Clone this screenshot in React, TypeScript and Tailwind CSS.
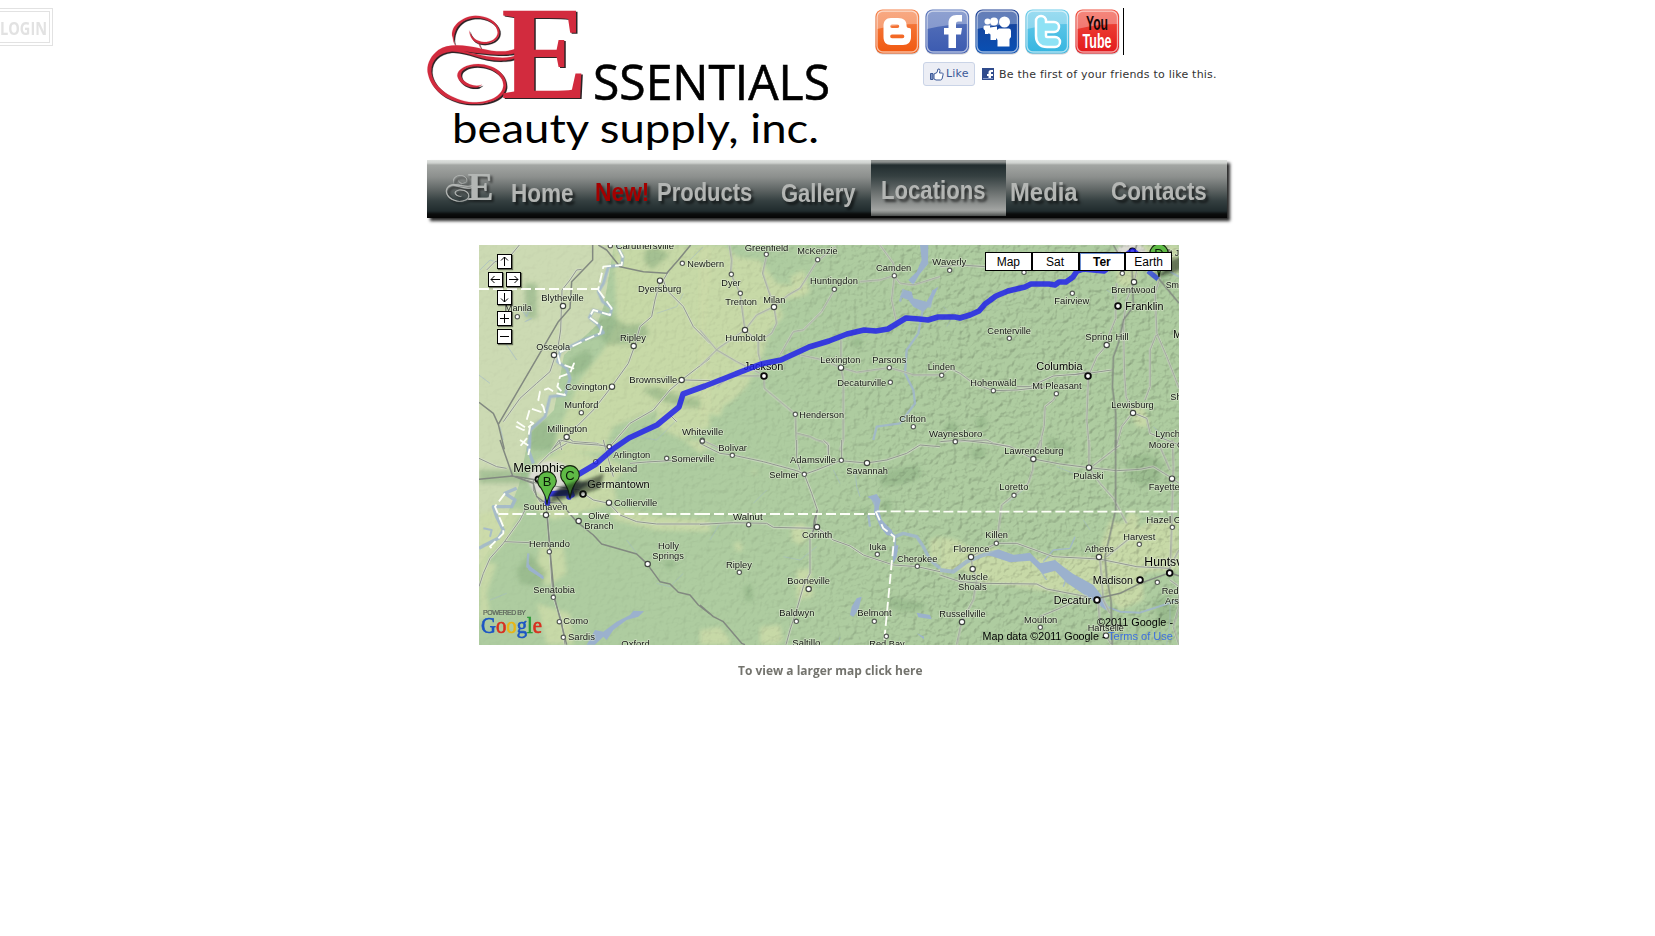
import type { ReactNode } from "react";

/* ---------- map data: every sheet is drawn at three units per pixel ---------- */

type Label = [text: string, x: number, y: number, width: number, size?: number];
type Dot = [x: number, y: number, kind?: "town" | "city" | "major"];

interface Sheet {
  ox: number;
  oy: number;
  light: string[];
  dark: string[];
  water: [d: string, width: number][];
  lakes: string[];
  roads: string[];
  highways: string[];
  borders: string[];
  dots: Dot[];
  labels: Label[];
}

const sheets: Sheet[] = [
  {
    ox: -9,
    oy: -5,
    light: [
      "M430 15H720V110L700 300L720 350L700 400L640 440L600 470L540 520L430 560L400 640H250L270 560L330 420L400 330L440 250Z",
      "M560 430L720 380V560L640 600L560 560Z",
    ],
    dark: [
      "M380 240L420 225L470 255L520 250L540 280L500 310L410 315L390 290Z",
      "M310 350L350 330L368 350L355 385L310 408L285 380Z",
      "M165 130H200V235H165Z",
      "M525 30L560 20L600 45L570 70L545 90L520 60Z",
      "M180 560L220 540L260 580L250 630H180Z",
      "M515 450L560 440L640 470L700 480L720 505L640 500L560 480Z",
    ],
    water: [
      ["M440 15L458 50L455 75L415 80L400 130L385 155L398 185L425 205L420 225L370 210L358 232L385 255L400 278L340 300L270 335L262 365L290 385L300 415L285 465L240 470L225 530L180 570L178 630", 9],
      ["M150 200L170 230L180 200M165 245L185 235", 3],
      ["M30 90L60 60L90 70M100 300L140 360M20 400L60 430M90 560L100 600", 2],
      ["M640 160L620 200L560 220M620 540L560 600L500 590M660 60L700 20", 1.5],
    ],
    lakes: [],
    roads: [
      "M148 15L115 55L75 65L50 90",
      "M275 630L268 600L248 628",
      "M335 88L320 90L300 120L276 150L272 270L265 315L255 350L240 395L200 430L150 475L100 545",
      "M570 125L555 180L545 230L510 260L495 315L475 370L425 440L370 510L290 590L245 630",
      "M595 95L580 120L590 150L640 200L670 260L700 290L720 310",
      "M720 355L680 385L635 420L600 450L550 510L480 550L420 620",
      "M290 590L310 605L380 610L415 622",
      "M640 420L720 422",
      "M600 525L620 545",
    ],
    highways: [
      "M368 15V60L305 125L300 205L265 245L85 553L103 628M85 553L70 520L27 487",
      "M385 15L410 30L450 80L520 95L590 100L625 60L662 15",
    ],
    borders: ["M27 147H385L400 80L455 75L458 50L440 15M385 150L425 205L420 225L370 210L358 232L395 260L390 280L262 340L270 370L310 385L312 370L300 400L270 410L262 440L285 465L260 460L235 445L210 455L205 480L220 500L225 520L180 505L170 540L190 550L170 565L140 545V560L160 570L180 560L175 590L145 625"],
    dots: [[421, 17], [637, 70], [570, 122, "city"], [279, 198, "city"], [142, 230], [252, 345, "city"], [491, 318, "city"], [426, 440, "city"], [334, 518], [635, 420, "city"], [290, 591, "city"], [418, 620], [697, 601]],
    labels: [
      ["Caruthersville", 437, 27, 175],
      ["Newbern", 652, 79, 110],
      ["Dyersburg", 504, 156, 130],
      ["Blytheville", 214, 183, 127],
      ["Manila", 104, 213, 82],
      ["Ripley", 450, 303, 78],
      ["Osceola", 199, 330, 101],
      ["Brownsville", 478, 429, 144],
      ["Covington", 286, 450, 127],
      ["Munford", 283, 503, 102],
      ["Millington", 232, 576, 120],
      ["Whiteville", 636, 585, 124],
    ],
  },
  {
    ox: 221,
    oy: -5,
    light: [
      "M0 15H75L110 50L180 60L230 130L300 140L330 160L280 175L230 180L250 230L210 270L190 340L140 440L100 480L70 500L60 530L20 520L0 540Z",
      "M270 110L310 90L330 150L290 175Z",
    ],
    dark: ["M455 300L480 290L490 310L470 325L450 315Z"],
    water: [
      ["M668 15L682 70L640 120M645 190L610 150L600 185M640 190L690 200L700 150M670 200L655 280L620 330L615 400L640 450L645 490L600 550L530 560L520 600", 7],
    ],
    lakes: [
      "M660 15H685L684 70L660 100L640 135L625 120L650 95L665 60Z",
      "M600 170L615 150L635 155L640 175L680 185L700 150L715 140L690 195L670 215L640 200L625 180Z",
    ],
    roads: [
      "M88 15L95 60L92 100L120 160L135 270L175 305V340L183 370",
      "M200 45L188 100L205 150L222 200L230 250L215 280L175 305",
      "M407 20L350 65L300 145L265 165L222 200L170 225L135 270L55 325L0 378",
      "M403 150L365 215L310 270L280 275L240 345",
      "M0 270L50 330L110 365L180 400",
      "M480 125L540 120L583 107L600 130L640 135L720 110",
      "M540 15L580 70L583 107L575 180L590 250",
      "M300 345L370 360L423 383L470 397L568 383L610 395L640 405H720",
      "M423 300V383L430 420V600L420 630",
      "M100 408H180M50 440L100 405",
      "M192 408L193 445L286 523L290 630M290 580L330 590L350 600L385 610V630",
      "M7 601L0 600M7 601L70 630",
    ],
    highways: [],
    borders: [],
    dots: [[199, 43], [353, 59], [94, 103], [121, 160], [222, 201, "city"], [403, 148], [583, 107], [135, 270, "city"], [423, 383, "city"], [568, 383], [571, 427], [192, 408, "major"], [286, 523], [640, 560]],
    labels: [
      ["Greenfield", 134, 31, 131],
      ["McKenzie", 292, 42, 121],
      ["Dyer", 64, 136, 58],
      ["Trenton", 76, 195, 95],
      ["Milan", 190, 187, 66],
      ["Huntingdon", 330, 132, 144],
      ["Camden", 528, 93, 106],
      ["Humboldt", 76, 303, 121],
      ["Lexington", 361, 369, 120],
      ["Parsons", 517, 369, 102],
      ["Decaturville", 412, 436, 147],
      ["Jackson", 131, 388, 119, 31],
      ["Henderson", 298, 534, 134],
      ["Clifton", 598, 546, 80],
      ["Bolivar", 55, 632, 86],
    ],
  },
  {
    ox: 461,
    oy: -5,
    light: ["M530 80L570 75L600 110L560 145L530 130Z", "M560 15H717V110L690 95L640 110L600 70L560 45Z", "M565 500L610 500L630 560L590 560Z"],
    dark: ["M105 540L130 525L145 555L115 570Z", "M10 560L40 540L60 570L30 585Z", "M320 590L350 600L400 630H330Z", "M640 80L690 60L700 100L650 130Z"],
    water: [["M690 95L717 110", 6], ["M10 200L40 230L20 260M500 150L530 170", 1.5], ["M640 560L680 600", 2]],
    lakes: [],
    roads: [
      "M0 80L60 75L136 80M252 97L260 90",
      "M581 30L590 90L582 126L560 180L550 250L553 400L558 470L578 518L545 560L525 630",
      "M530 130L527 170V235L505 290L500 315L470 350L445 408L440 540L448 630",
      "M515 390L445 400L340 408L270 440L230 440",
      "M0 405L30 385L60 400L100 430L160 452L230 450L320 440",
      "M349 460L340 480L315 500L312 560L305 590L302 630",
      "M660 110L645 160L650 280L680 350L717 445M648 285L630 330V440L615 480",
      "M578 518L620 535L630 580L717 615",
      "M45 604L140 600L160 610L210 620",
      "M445 395L400 405",
    ],
    highways: ["M590 15L575 60L580 200L550 240L535 310L520 350L517 440L527 520V630", "M655 115L717 190M520 15L545 60L580 70"],
    borders: [],
    dots: [[29, 91], [252, 97], [397, 160], [547, 100], [582, 126, "city"], [534, 198, "major"], [208, 295], [500, 315, "city"], [444, 408, "major"], [5, 406], [160, 452], [349, 461], [579, 519, "city"], [46, 604], [577, 34, "major"]],
    labels: [
      ["Waverly", -23, 75, 102],
      ["Brentwood", 514, 159, 133],
      ["Sm", 677, 144, 40],
      ["lt J", 684, 46, 33],
      ["Fairview", 343, 192, 105],
      ["Franklin", 556, 208, 114, 31],
      ["Centerville", 142, 282, 131],
      ["Spring Hill", 436, 300, 130],
      ["Mu", 700, 293, 42, 31],
      ["Columbia", 289, 388, 139, 31],
      ["Linden", -37, 390, 82],
      ["Hohenwald", 91, 438, 138],
      ["Mt Pleasant", 277, 446, 148],
      ["Shel", 691, 480, 55],
      ["Lewisburg", 514, 504, 127],
      ["Waynesboro", -33, 591, 160],
      ["Lynchb", 646, 591, 90],
    ],
  },
  {
    ox: -9,
    oy: 195,
    light: [
      "M27 220L100 210L160 205L110 300L60 350L27 430Z",
      "M200 60L300 30L420 60L470 80L430 130L440 180L400 200L250 240L200 210Z",
      "M210 320L280 320L290 400L230 440L200 380Z",
      "M430 200L560 230L720 240V275L560 270L430 240Z",
      "M27 370H80L50 460L60 520L27 540Z",
      "M200 490L300 520L310 614H230Z",
      "M640 0H720V20L690 40Z",
    ],
    dark: ["M27 90H180L170 130H27Z", "M140 390L180 340L230 400L210 440L150 430Z", "M580 365L610 358L618 378L590 388Z"],
    water: [
      ["M178 0L175 30L190 70M140 145L105 160L135 180L125 200L70 200L80 230L100 270L85 295L45 315L27 325", 10],
      ["M40 265L65 270L60 290", 6],
      ["M175 340L172 380L220 415", 7],
      ["M60 480L110 460M640 400L600 440L560 430M470 300L500 340", 1.5],
    ],
    lakes: [
      "M350 614L375 570L400 575L440 545L480 525L490 512L522 514L505 530L470 540L430 570L410 600L400 590L375 614Z",
      "M172 365L182 380L220 408V418L175 390Z",
    ],
    roads: [
      "M27 55L80 80L110 85M290 10L240 40L190 90M270 0L310 10L385 15L418 20",
      "M480 70L530 66L720 55",
      "M270 190L210 185L190 150V120",
      "M165 210L150 240L100 310L60 355L40 400L27 440",
      "M105 305L180 308",
      "M232 225L240 335L245 420L250 470L275 545L285 614",
      "M340 160L370 180L417 190L450 225L500 245L560 252H720",
      "M400 0L410 40L430 110",
      "M120 105L200 130L330 150",
    ],
    highways: [
      "M90 0L128 108L190 130L200 170L228 190L240 330L253 470L290 614M27 118L128 108L200 120",
      "M260 170L290 210L320 245L370 285L395 312L500 342L530 370L570 425L600 432L625 457L660 465L685 495L720 522",
    ],
    borders: ["M85 222H720", "M150 0L180 20L175 45M105 160L75 200L100 260V280L60 320L70 330"],
    dots: [[418, 20], [590, 55], [697, 4], [205, 118, "major"], [339, 162, "major"], [417, 188, "city"], [228, 225, "city"], [326, 243, "city"], [238, 335], [533, 372, "city"], [250, 472], [268, 545], [280, 592], [377, 65]],
    labels: [
      ["Arlington", 430, 54, 111],
      ["Lakeland", 388, 96, 114],
      ["Somerville", 604, 65, 130],
      ["Memphis", 130, 95, 156, 36],
      ["Germantown", 352, 142, 187, 31],
      ["Collierville", 432, 197, 130],
      ["Southaven", 160, 210, 132],
      ["Olive", 355, 237, 63],
      ["Branch", 343, 267, 88],
      ["Hernando", 177, 321, 123],
      ["Holly", 564, 327, 63],
      ["Springs", 547, 357, 95],
      ["Senatobia", 190, 459, 125],
      ["Como", 280, 552, 75],
      ["Sardis", 294, 600, 81],
      ["Oxford", 454, 620, 85],
    ],
  },
  {
    ox: 221,
    oy: 195,
    light: [
      "M275 260L310 250L330 290L300 315L275 300Z",
      "M100 310L120 305L130 330L110 335Z",
      "M180 560L240 555L250 600L230 614H180Z",
      "M0 570L60 560L90 600V614H0Z",
      "M690 300L720 290V370L690 360Z",
      "M290 390L330 385L340 470L290 480Z",
      "M155 90L168 90L165 110Z",
      "M495 60L515 60L510 85Z",
    ],
    dark: [
      "M535 100L600 85L655 75L665 110L600 135L545 140Z",
      "M540 190L570 175L575 210L550 220Z",
      "M130 440L155 435L160 480L138 485Z",
      "M570 470L640 485L672 490V510L600 515L565 500Z",
      "M475 210L500 205L505 225L480 225Z",
    ],
    water: [
      ["M515 170L530 200L540 240L565 275L585 290L610 280L650 290L670 320L690 360L720 385", 10],
      ["M505 225L510 260M585 290V350L590 330", 7],
      ["M465 90L470 140L480 170", 2],
      ["M350 320L300 360L250 350M200 150L160 190M400 90L420 130M60 250L30 300M420 590L415 614", 1.5],
    ],
    lakes: [
      "M502 170L530 162L542 180L535 210L545 240L575 270L583 290L560 285L540 260L522 215L525 185Z",
      "M455 500L470 475L485 470L475 510L460 530L450 525Z",
      "M650 518L690 525L695 538L655 532Z",
      "M650 580L672 590V598Z",
      "M575 320L595 315L590 350L580 370Z",
    ],
    roads: [
      "M0 10L60 40L97 45L190 65L290 92L313 103L350 90L420 62L500 69L560 60L620 40L660 15L720 20",
      "M290 0V60L300 90M370 0L385 15V45M425 0V55",
      "M313 103L335 160L352 210L345 260L330 290V400L310 440L290 510L270 570L258 614",
      "M0 253L100 248L200 250L220 262L340 265",
      "M350 262L400 300L450 318L490 345L580 375L652 380L720 395",
    ],
    highways: ["M0 495L40 530L70 545L125 610L135 614", "M352 210L343 240L340 275"],
    borders: ["M0 222H525M530 214H720", "M527 214L550 265L583 290L575 370L553 600"],
    dots: [[97, 46], [424, 61], [501, 69, "city"], [313, 103], [146, 254], [351, 261, "city"], [118, 397], [532, 343], [652, 379], [326, 447, "city"], [289, 544], [523, 544], [559, 589], [7, 3]],
    labels: [
      ["Adamsville", 270, 69, 138],
      ["Savannah", 439, 102, 125],
      ["Selmer", 208, 113, 88],
      ["Walnut", 99, 240, 89],
      ["Corinth", 306, 294, 91],
      ["Iuka", 508, 330, 51],
      ["Cherokee", 591, 366, 121],
      ["Ripley", 78, 384, 78],
      ["Booneville", 262, 432, 128],
      ["Baldwyn", 238, 528, 105],
      ["Belmont", 472, 528, 103],
      ["Saltillo", 277, 616, 84],
      ["Red Bay", 508, 620, 106],
    ],
  },
  {
    ox: 461,
    oy: 195,
    light: [
      "M0 290L50 300L100 330L170 325L240 355L330 350L470 350L510 240L600 260L630 240L717 240V390L610 400V480L540 510L480 450L470 470L300 450L200 435L130 430L70 390L0 400Z",
      "M570 210L600 230L590 260L550 250Z",
    ],
    dark: ["M560 60L620 40L670 70L660 120L610 140L560 110Z", "M90 30L130 20L140 50L100 60Z", "M640 480L690 470L717 520L660 560Z"],
    water: [
      ["M0 390L40 395L80 365L130 345L170 335L220 350L270 350L310 385L350 375L380 410L420 440L470 470L500 500", 12],
      ["M500 500L540 515L600 518L717 480", 6],
      ["M310 365L340 330L390 325L405 290M300 390L320 420M380 410L370 440", 4],
      ["M690 480V550L680 614M250 150L200 190M350 80L400 100M430 240L450 270", 1.5],
    ],
    lakes: [
      "M140 345L175 328L220 345L270 338L300 370L345 360L370 380L400 402L460 435L495 480L500 512L470 490L420 455L380 428L345 392L310 402L270 362L210 367L160 350Z",
    ],
    roads: [
      "M0 5L60 0L150 10L210 20L280 57L360 72L447 83L530 92L600 88L640 80L697 115L717 130",
      "M302 0L280 57L278 90L265 130L222 165L185 195L170 310",
      "M447 0V83L480 130L520 175L560 250",
      "M170 310H230L340 350L477 357L590 380L690 385",
      "M93 350L130 330L170 310M93 350L98 387L110 420L100 480L65 545L50 614",
      "M0 405L60 425L130 430L290 432L320 447L440 470L300 530",
      "M697 0L700 80L695 262L690 400M660 20L690 90M680 400L717 330",
      "M480 357L490 480L510 520M575 290L500 350M540 15L520 30L450 85",
      "M475 485L480 560L500 590L515 614M690 420L717 440V500L700 560L717 614",
    ],
    highways: ["M527 0V210L495 350L500 410L513 480L517 614", "M475 475L540 460L600 430L690 398L717 408"],
    borders: ["M10 215H717"],
    dots: [[280, 57, "city"], [447, 83, "city"], [222, 166], [696, 116, "city"], [169, 310], [93, 351, "city"], [98, 387, "city"], [477, 351, "city"], [598, 313], [697, 262], [689, 399, "major"], [600, 420, "major"], [471, 480, "major"], [652, 427], [66, 546, "city"], [301, 562], [498, 587, "city"], [46, 5]],
    labels: [
      ["Lawrenceburg", 193, 42, 177],
      ["Moore Co", 626, 23, 120],
      ["Loretto", 178, 150, 87],
      ["Pulaski", 400, 116, 91],
      ["Fayette", 626, 150, 93],
      ["Hazel Gr", 619, 248, 115],
      ["Killen", 136, 294, 68],
      ["Harvest", 550, 299, 96],
      ["Florence", 40, 336, 108],
      ["Athens", 435, 336, 87],
      ["Huntsvi", 613, 378, 122, 36],
      ["Madison", 458, 430, 121, 31],
      ["Muscle", 54, 420, 90],
      ["Shoals", 54, 450, 86],
      ["Redst", 665, 461, 72],
      ["Ars", 675, 490, 42],
      ["Decatur", 341, 490, 113, 31],
      ["Russellville", -2, 531, 139],
      ["Moulton", 252, 549, 100],
      ["Hartselle", 443, 573, 109],
    ],
  },
];

const dotStyles = {
  town: { r: 6.5, w: 3.5, stroke: "#565b55" },
  city: { r: 8, w: 3.5, stroke: "#3f443f" },
  major: { r: 8.5, w: 5.5, stroke: "#0a0a0a" },
};

function Layer({ children }: { children: (s: Sheet) => ReactNode }) {
  return (
    <>
      {sheets.map((s, i) => (
        <g key={i} transform={`translate(${s.ox} ${s.oy}) scale(0.33333)`}>
          {children(s)}
        </g>
      ))}
    </>
  );
}

function Pin({ x, y, letter }: { x: number; y: number; letter: string }) {
  return (
    <g transform={`translate(${x} ${y})`}>
      <path d="M0 0L12 -17L34 -25L30 -10Z" fill="#101810" opacity="0.5" filter="url(#soft)" />
      <path d="M0 0C-0.8 -9 -3.5 -12 -6 -16.500A9.3 9.3 0 1 1 6 -16.500C3.5 -12 0.8 -9 0 0Z" fill="#5fba46" stroke="#16260f" strokeWidth="1.1" />
      <text y="-19" textAnchor="middle" fontSize="13" fill="#0b1a08" fontFamily="Liberation Sans, sans-serif">
        {letter}
      </text>
    </g>
  );
}

function RouteMap() {
  const route =
    "M68.500 258V249L92 247.500L93 250M90 252L95 232L117 219L134 204L150 193L178 180L200 162L204 149L226 141L254 130L282 119L302 115L330 102L350 96L368 89L385 85L397 86L409 84L427 73L440 74L449 75L459 72L476 72L481 73L491 70L500 66L506 59L517 51L529 46L546 42L552 39L570 39L576 40L580 37L587 37L594 32L598 26L604 24L625 26L640 15L650 8L654 6L657 8";
  return (
    <svg width="700" height="400" viewBox="0 0 700 400" className="block overflow-hidden">
      <defs>
        <filter id="relief" x="0" y="0" width="100%" height="100%" colorInterpolationFilters="sRGB">
          <feTurbulence type="fractalNoise" baseFrequency="0.17" numOctaves="3" seed="11" />
          <feColorMatrix values="0 0 0 0 0  0 0 0 0 0  0 0 0 0 0  1 0 0 0 0" />
          <feDiffuseLighting surfaceScale="2.2" diffuseConstant="1.18" lightingColor="#ffffff">
            <feDistantLight azimuth="225" elevation="58" />
          </feDiffuseLighting>
        </filter>
        <filter id="soft" x="-20%" y="-20%" width="140%" height="140%">
          <feGaussianBlur stdDeviation="1.6" />
        </filter>
        <filter id="softer" x="-20%" y="-20%" width="140%" height="140%">
          <feGaussianBlur stdDeviation="7" />
        </filter>
        <linearGradient id="hills">
          <stop offset="0.08" stopColor="#fff" stopOpacity="0.04" />
          <stop offset="0.4" stopColor="#fff" stopOpacity="0.13" />
          <stop offset="0.65" stopColor="#fff" stopOpacity="0.3" />
        </linearGradient>
        <mask id="hillmask">
          <rect width="700" height="400" fill="url(#hills)" />
        </mask>
      </defs>
      <rect width="700" height="400" fill="#aecca0" />
      <path d="M0 0H135L125 60L118 80L85 110L75 165L50 190L40 240L20 290L0 320Z" fill="#ccdab3" />
      <Layer>
        {(s) => (
          <g filter="url(#softer)">
            {s.light.map((d) => <path key={d} d={d} fill="#cbdba8" opacity="0.85" />)}
            {s.dark.map((d) => <path key={d} d={d} fill="#8db083" opacity="0.6" />)}
          </g>
        )}
      </Layer>
      <ellipse cx="72" cy="234" rx="22" ry="18" fill="#dcdcd4" filter="url(#soft)" />
      <ellipse cx="652" cy="10" rx="16" ry="12" fill="#dcdcd4" filter="url(#soft)" />
      <g mask="url(#hillmask)" className="mix-blend-multiply">
        <rect width="700" height="400" filter="url(#relief)" />
      </g>
      <Layer>
        {(s) => (
          <g>
            {s.water.map(([d, w]) => <path key={d} d={d} fill="none" stroke="#a0b6cc" strokeWidth={w} strokeLinejoin="round" opacity="0.85" />)}
            {s.lakes.map((d) => <path key={d} d={d} fill="#9bb1cd" />)}
          </g>
        )}
      </Layer>
      <Layer>
        {(s) => (
          <g fill="none" strokeLinejoin="round">
            {s.roads.map((d) => <path key={d} d={d} stroke="#d9e0d0" strokeWidth="7" opacity="0.75" />)}
            {s.roads.map((d) => <path key={d + "r"} d={d} stroke="#90978e" strokeWidth="3" />)}
            {s.highways.map((d) => <path key={d} d={d} stroke="#828980" strokeWidth="4.5" />)}
            {s.borders.map((d) => <path key={d} d={d} stroke="#fdfff8" strokeWidth="5.5" strokeDasharray="30 12" />)}
          </g>
        )}
      </Layer>
      <Layer>
        {(s) => (
          <g>
            {s.dots.map(([x, y, kind = "town"]) => (
              <circle key={`${x}-${y}`} cx={x} cy={y} r={dotStyles[kind].r} fill="#fff" stroke={dotStyles[kind].stroke} strokeWidth={dotStyles[kind].w} />
            ))}
            {s.labels.map(([text, x, y, width, size = 28]) => (
              <text
                key={text}
                x={x}
                y={y + 1}
                textLength={width}
                lengthAdjust="spacingAndGlyphs"
                fontSize={size}
                fontFamily="Liberation Sans, sans-serif"
                fill={size > 28 ? "#000" : "#161916"}
                stroke="#e3ecd6"
                strokeOpacity="0.6"
                strokeWidth="5"
                strokeLinejoin="round"
                paintOrder="stroke"
              >
                {text}
              </text>
            ))}
          </g>
        )}
      </Layer>
      <path d={route} fill="none" stroke="#1c1cec" strokeOpacity="0.82" strokeWidth="5.6" strokeLinejoin="round" strokeLinecap="round" />
      <path d="M669 26L679 34" stroke="#2f45e0" strokeOpacity="0.8" strokeWidth="5" />
      <path d="M70 253L94 249L112 238L96 236L78 246Z" fill="#0c1430" opacity="0.6" filter="url(#soft)" />
      <Pin x={91} y={253.5} letter="C" />
      <Pin x={68} y={259.5} letter="B" />
      <Pin x={680} y={32} letter="D" />
      <text x="4" y="370" fontSize="7" textLength="43" fill="#5b625a" stroke="#5b625a" strokeWidth="0.2" fontFamily="Liberation Sans, sans-serif">
        POWERED BY
      </text>
      <text x="2" y="388" fontSize="23" textLength="61" lengthAdjust="spacingAndGlyphs" fontFamily="Liberation Serif, serif" strokeWidth="0.7">
        <tspan fill="#1c56c4" stroke="#1c56c4">G</tspan>
        <tspan fill="#d8301f" stroke="#d8301f">o</tspan>
        <tspan fill="#e9b515" stroke="#e9b515">o</tspan>
        <tspan fill="#1c56c4" stroke="#1c56c4">g</tspan>
        <tspan fill="#2b9a36" stroke="#2b9a36">l</tspan>
        <tspan fill="#d8301f" stroke="#d8301f">e</tspan>
      </text>
      <g fontSize="11.500" fontFamily="Liberation Sans, sans-serif" fill="#000">
        <text x="618" y="381" textLength="76" lengthAdjust="spacingAndGlyphs">©2011 Google -</text>
        <text x="503.500" y="395" textLength="123" lengthAdjust="spacingAndGlyphs">Map data ©2011 Google -</text>
        <text x="629" y="395" textLength="65" lengthAdjust="spacingAndGlyphs" fill="#3c6fe0">Terms of Use</text>
      </g>
    </svg>
  );
}

function PanButton({ d, className }: { d: string; className: string }) {
  return (
    <button className={`absolute flex size-[15px] items-center justify-center border border-black bg-white shadow-[1px_1px_1px_rgba(0,0,0,0.5)] ${className}`}>
      <svg width="13" height="13" viewBox="0 0 13 13" className="shrink-0" fill="none" stroke="#000" strokeWidth="1">
        <path d={d} />
      </svg>
    </button>
  );
}

/* ---------- header ---------- */

function Ampersand({ color }: { color: string }) {
  return (
    <g fill={color} stroke={color} strokeLinecap="round" strokeLinejoin="round">
      <path
        d="M148 93C150 120 168 132 192 132C225 130 242 112 238 90C230 60 195 46 165 47C120 50 88 85 98 112C100 124 101 130 106 136C98 122 102 98 112 82C128 58 155 52 178 54C208 58 232 75 233 98C232 116 212 126 192 126C172 124 156 116 148 93Z"
        strokeWidth="0.5"
      />
      <path
        d="M290 144C265 158 225 156 185 146C130 134 85 130 55 150C28 170 18 200 24 222C34 272 85 308 150 312C205 314 250 300 258 262C262 222 225 194 175 192C135 192 106 212 113 232C122 256 150 266 174 262L186 254C170 261 146 256 130 241C112 220 130 200 170 199C215 200 250 226 250 256C248 290 205 308 158 307C96 301 38 262 34 215C33 180 56 160 92 155C135 152 180 182 240 182C265 182 280 178 290 172L288 166C265 176 225 178 130 153C225 168 270 166 290 158Z"
        strokeWidth="0.5"
      />
      <path d="M176 130L181 142" fill="none" strokeWidth="2" />
    </g>
  );
}

function LogoMark({ color, shade }: { color: string; shade: string }) {
  return (
    <>
      <g transform="translate(1.200 1.300) scale(0.33333)">
        <Ampersand color={shade} />
      </g>
      <text x="82.600" y="99.300" fontSize="134" fontWeight="bold" fontFamily="Liberation Serif, serif" textLength="87" lengthAdjust="spacingAndGlyphs" fill={shade}>
        E
      </text>
      <g transform="scale(0.33333)">
        <Ampersand color={color} />
      </g>
      <text x="81" y="98" fontSize="134" fontWeight="bold" fontFamily="Liberation Serif, serif" textLength="87" lengthAdjust="spacingAndGlyphs" fill={color}>
        E
      </text>
    </>
  );
}

function Logo() {
  return (
    <svg width="420" height="155" viewBox="0 0 420 155" className="-ml-[7px] block shrink-0">
      <LogoMark color="#d22b3e" shade="#2b2326" />
      <text x="173" y="99.500" fontSize="50" textLength="237" lengthAdjust="spacingAndGlyphs" fontFamily="Open Sans, Noto Sans, sans-serif" fill="#000" stroke="#000" strokeWidth="0.6">
        SSENTIALS
      </text>
      <text x="32" y="142.500" fontSize="40" textLength="367" lengthAdjust="spacingAndGlyphs" fontFamily="Lato, sans-serif" fill="#000">
        beauty supply, inc.
      </text>
    </svg>
  );
}

function Badge({ id, top, bottom, children }: { id: string; top: string; bottom: string; children: ReactNode }) {
  return (
    <svg width="45" height="46" viewBox="0 0 45 46" className="block shrink-0">
      <defs>
        <linearGradient id={id} x1="0" y1="0" x2="0" y2="1">
          <stop offset="0" stopColor={top} />
          <stop offset="1" stopColor={bottom} />
        </linearGradient>
      </defs>
      <rect x="0.500" y="1.500" width="44" height="44" rx="7" fill="#8a8a90" opacity="0.4" />
      <rect x="0.500" y="0.500" width="43.500" height="44" rx="7" fill={`url(#${id})`} />
      <path d="M2 20V8Q2 2 8 2H37Q42.500 2 42.500 8V15Q24 15 2 20Z" fill="#fff" opacity="0.32" />
      <rect x="2" y="2" width="40.500" height="41" rx="6" fill="none" stroke="#fff" strokeOpacity="0.6" strokeWidth="1.300" />
      {children}
    </svg>
  );
}

function SocialRow() {
  return (
    <div className="-ml-[0.5px] flex h-[47px] items-start gap-[5px]">
      <Badge id="blogger" top="#f5824a" bottom="#f1580f">
        <path fillRule="evenodd" fill="#fff" d="M16 9H23C29 9 31.500 12 31.500 16C31.500 18 32 19 34 19C36 19 36 20 36 22V28C36 33 33 36 28 36H16C11 36 8.500 33 8.500 28V17C8.500 12 11 9 16 9ZM17 15.500A1.700 1.700 0 0 0 17 19H22.500A1.700 1.700 0 0 0 22.500 15.500ZM17 25.500A1.800 1.800 0 0 0 17 29.200H27.500A1.800 1.800 0 0 0 27.500 25.500Z" />
      </Badge>
      <Badge id="fb" top="#5a75bb" bottom="#3b5ab0">
        <path fill="#fff" d="M37 6V12.500H33.500C31.500 12.500 31 13.500 31 15V19H37L36 25.500H31V39H23.500V25.500H19V19H23.500V14C23.500 9 26.500 6 31.500 6Z" />
      </Badge>
      <Badge id="myspace" top="#1c3f94" bottom="#0850b4">
        <g fill="#fff">
          <circle cx="12.500" cy="12.500" r="3" />
          <circle cx="19" cy="12.500" r="4" />
          <circle cx="29.500" cy="13" r="5.500" />
          <path d="M8.500 18Q8.500 16.500 10 16.500H15V18.500L22 17.500V21L24 19.500H34Q36 19.500 36 22V28L34.500 30V37.500H22.500V31L21 29V31H15.500V25.500L13.500 24V25H10V21.500L8.500 20Z" />
        </g>
      </Badge>
      <Badge id="twitter" top="#6cccea" bottom="#35b5e0">
        <path d="M16 12V27Q16 33 22 33H30M16 18H29" fill="none" stroke="#fff" strokeWidth="12.500" strokeLinecap="round" />
        <path d="M16 12V27Q16 33 22 33H30M16 18H29" fill="none" stroke="#8ee2f5" strokeWidth="7.500" strokeLinecap="round" />
      </Badge>
      <Badge id="youtube" top="#f0503e" bottom="#e3181c">
        <text x="11" y="21" fontSize="20" fontWeight="bold" textLength="22" lengthAdjust="spacingAndGlyphs" fontFamily="Liberation Sans, sans-serif" fill="#180808">
          You
        </text>
        <text x="7.500" y="39" fontSize="20" fontWeight="bold" textLength="29" lengthAdjust="spacingAndGlyphs" fontFamily="Liberation Sans, sans-serif" fill="#fff">
          Tube
        </text>
      </Badge>
      <div className="-mt-px -ml-[1.5px] h-[47px] w-px bg-black" />
    </div>
  );
}

function LikeRow() {
  return (
    <div className="mt-[6px] ml-[48px] flex h-6 items-center font-['DejaVu_Sans',sans-serif] text-[11px]">
      <button className="flex h-6 w-[52px] items-center rounded-[3px] border border-[#cad4e7] bg-[#eceef5] pl-[6px] text-[#3b5998]">
        <svg width="14" height="13" viewBox="0 0 14 13" className="mr-[2px] shrink-0">
          <path d="M0.500 5.500H3V11.500H0.500Z" fill="#7f93c2" stroke="#3b5998" />
          <path d="M4 6L7 4.500L8 1Q10 0.500 10 2.500L9.500 5H12.500Q13.500 5.500 13 7L12 11Q11.500 12 10.500 12H6L4 11Z" fill="#fff" stroke="#3b5998" />
        </svg>
        <span className="pt-px tracking-[0.2px]">Like</span>
      </button>
      <svg width="12" height="12" viewBox="0 0 12 12" className="ml-[7px] shrink-0">
        <path d="M0 0H12V12H0Z" fill="#2f4b8c" />
        <path d="M11 2V4H9.500Q9 4 9 5V6H11V8H9V11H6.500V8H5V6H6.500V4.500Q6.500 2 9 2Z" fill="#fff" />
        <path d="M1 10.500H11" stroke="#8397c6" />
      </svg>
      <span className="ml-[5px] pt-[2px] whitespace-nowrap tracking-[0.22px] text-[#333]">Be the first of your friends to like this.</span>
    </div>
  );
}

/* ---------- navigation ---------- */

const navText = "block shrink-0 whitespace-nowrap font-['Liberation_Sans',sans-serif] text-[26.5px] leading-[30px] font-bold text-[#b4b6b4] [text-shadow:3px_3px_3px_rgba(0,0,0,0.6)]";

function NavBar() {
  return (
    <nav className="flex h-[58px] w-[800px] items-start bg-[linear-gradient(to_bottom,#dfe2df_0px,#cfd2cf_3px,#a3a6a3_5px,#8c8f8d_17px,#626867_29px,#343f40_41px,#202b2d_51px,#0b0d0d_54px,#050505_58px)] shadow-[3px_3px_3px_rgba(0,0,0,0.85)]">
      <a className="block h-[58px] w-[84px] shrink-0 pt-[11px] pl-[18px]">
        <svg width="50" height="34" viewBox="5 4 168 110" className="block drop-shadow-[2px_2px_1px_rgba(0,0,0,0.5)]">
          <LogoMark color="#b3b6b4" shade="#8a8f8d" />
        </svg>
      </a>
      <a className={`${navText} w-[84px] pt-[18px]`}>
        <span className="block w-fit origin-left scale-x-[0.85]">Home</span>
      </a>
      <a className={`${navText} w-[62px] pt-[17px]`}>
        <span className="block w-fit origin-left scale-x-[0.86] text-[#a30000]">New!</span>
      </a>
      <a className={`${navText} w-[124px] pt-[17px]`}>
        <span className="block w-fit origin-left scale-x-[0.83]">Products</span>
      </a>
      <a className={`${navText} w-[90px] pt-[18px]`}>
        <span className="block w-fit origin-left scale-x-[0.83]">Gallery</span>
      </a>
      <a className={`${navText} h-[56px] w-[135px] bg-[linear-gradient(to_bottom,#949896_0px,#8c908e_2px,#222d2f_5px,#354041_16px,#707574_34px,#a2a4a2_50px,#8d908e_52px,#4a4d4c_56px)] pt-[15px] pl-[10px]`}>
        <span className="block w-fit origin-left scale-x-[0.835]">Locations</span>
      </a>
      <a className={`${navText} w-[105px] pt-[17px] pl-[4px]`}>
        <span className="block w-fit origin-left scale-x-[0.9]">Media</span>
      </a>
      <a className={`${navText} pt-[16px]`}>
        <span className="block w-fit origin-left scale-x-[0.845]">Contacts</span>
      </a>
    </nav>
  );
}

export default function App() {
  return (
    <div className="relative h-[936px] w-full overflow-hidden bg-white font-['Liberation_Sans',sans-serif]">
      <a className="absolute top-2 left-0 block h-[38px] w-[53px] border border-l-0 border-[#e2e2e2] py-[2px] pr-[2px]">
        <span className="flex h-full items-center border border-l-0 border-[#e2e2e2]">
          <span className="origin-left scale-x-[0.81] pt-[2px] font-['Open_Sans',sans-serif] text-[18px] font-bold text-[#e2e2e2]">LOGIN</span>
        </span>
      </a>
      <div className="mx-auto w-[801px]">
        <header className="flex h-[160px] items-start">
          <Logo />
          <div className="ml-[35px] pt-[9px]">
            <SocialRow />
            <LikeRow />
          </div>
        </header>
        <NavBar />
        <main className="ml-[52px] w-[700px] pt-[27px]">
          <div className="relative h-[400px]">
            <RouteMap />
            <PanButton className="top-[9px] left-[18px]" d="M6.500 2V11M3 5.500L6.500 2L10 5.500" />
            <PanButton className="top-[27px] left-[9px]" d="M2 6.500H11M5.500 3L2 6.500L5.500 10" />
            <PanButton className="top-[27px] left-[27px]" d="M2 6.500H11M7.500 3L11 6.500L7.500 10" />
            <PanButton className="top-[45px] left-[18px]" d="M6.500 2V11M3 7.500L6.500 11L10 7.500" />
            <PanButton className="top-[66px] left-[18px]" d="M2 6.500H11M6.500 2V11" />
            <PanButton className="top-[84px] left-[18px]" d="M2 6.500H11" />
            <div className="absolute top-[7px] left-[506px] flex h-[19px] w-[187px] text-[12px] text-black">
              <button className="flex-1 border border-black bg-white leading-none">Map</button>
              <button className="flex-1 border border-black bg-white leading-none">Sat</button>
              <button className="flex-1 border border-black bg-white leading-none font-bold shadow-[inset_1px_1px_0_#6c8fd0]">Ter</button>
              <button className="flex-1 border border-black bg-white leading-none">Earth</button>
            </div>
          </div>
          <a className="mt-[15px] ml-[259px] block w-fit origin-left scale-x-[0.92] whitespace-nowrap font-['Open_Sans',sans-serif] text-[13px] leading-5 font-bold text-[#73736d]">
            To view a larger map click here
          </a>
        </main>
      </div>
    </div>
  );
}
